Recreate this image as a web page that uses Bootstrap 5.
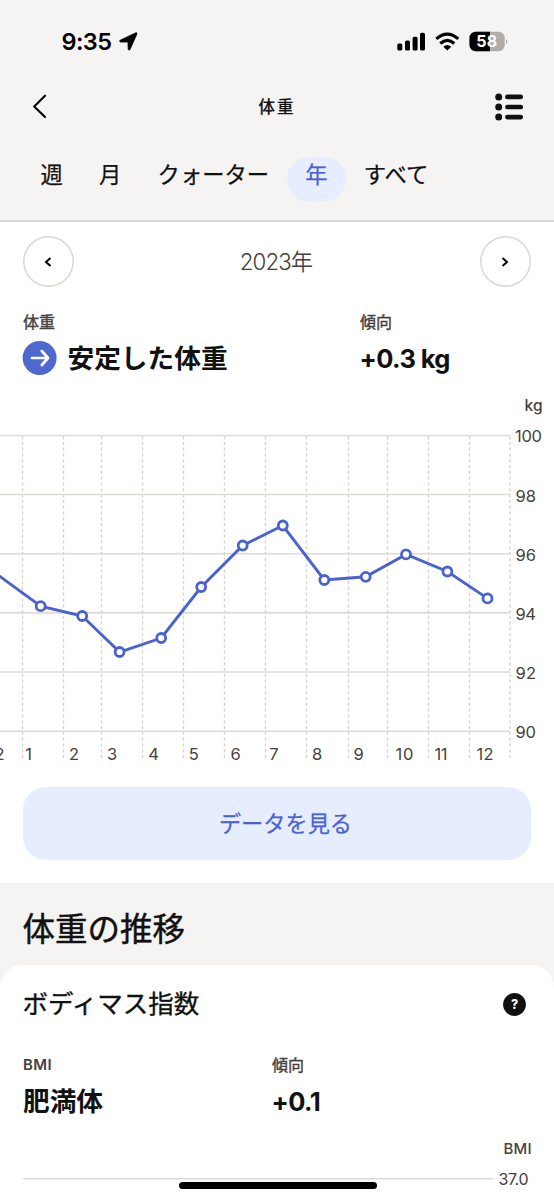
<!DOCTYPE html>
<html lang="ja">
<head>
<meta charset="utf-8">
<meta name="viewport" content="width=device-width, initial-scale=1">
<title>体重</title>
<link rel="stylesheet" href="https://cdn.jsdelivr.net/npm/bootstrap@5.3.0/dist/css/bootstrap.min.css">
<style>
  body { font-family: Inter, "Noto Sans CJK JP", sans-serif; color: #111; background: #fff; }
  .screen { width: 554px; height: 1200px; }
  .app-head { height: 222px; background: #f5f4f3; border-bottom: 2px solid #dbdad8; }
  .status { height: 83px; padding: 0 46px 0 61.5px; color: #000; }
  .clock { font-size: 23.5px; font-weight: 600; letter-spacing: -.6px; line-height: 28px; }
  .title-row { height: 47px; padding: 0 31px 0 32px; }
  .page-title { font-size: 16.5px; font-weight: 500; letter-spacing: 2px; line-height: 22px; margin: 0 1px 0 0; -webkit-text-stroke: .2px; }
  .tabs { padding: 27px 0 0 22.5px; }
  .tab { height: 45px; padding: 0 18.1px 10px; border-radius: 22.5px; font-size: 22.3px; line-height: 35px; font-weight: 400; -webkit-text-stroke: .25px; color: #111; text-decoration: none; }
  .tab.on { background: #e6edff; color: #4a62d0; }
  .period { height: 51px; margin: 14px 23px 0; }
  .round { width: 51px; height: 51px; border: 0; box-shadow: inset 0 0 0 1.5px #dad7d2; border-radius: 50%; background: #fff; padding: 0 1px 0 0; }
  .year { font-size: 22.3px; letter-spacing: -.9px; color: #45413e; font-weight: 350; margin-right: 2px; }
  .stat-label { font-size: 16px; line-height: 20px; font-weight: 600; color: #45413e; }
  .cjk-mid { font-weight: 400; -webkit-text-stroke: .4px; }
  .stat-value { font-size: 26.7px; line-height: 34px; font-weight: 700; color: #111; }
  .num { font-size: 25.5px; letter-spacing: -.6px; line-height: 36px; margin-left: -.5px; }
  .stats { margin: 25px 23px 0; height: 78px; }
  .stats .value-row { margin-top: 9px; }
  .chart { width: 554px; height: 397px; }
  .chart text { font-size: 16.5px; fill: #45413e; font-weight: 400; }
  .see-data { height: 73px; margin: 0 23px; padding: 1px 0 0 17px; border-radius: 23px; background: #e6edff; color: #4a62d0; font-size: 22.2px; -webkit-text-stroke: .25px; border: 0; width: 508px; }
  .trend { margin-top: 23px; height: 317px; background: #f5f4f3; }
  .trend h1 { font-size: 32.5px; line-height: 40px; font-weight: 400; margin: 0; padding: 27px 22.5px 15px; -webkit-text-stroke: .45px; }
  .bmi-card { height: 235px; background: #fff; border-radius: 23px 23px 0 0; }
  .bmi-card h2 { font-size: 25.5px; line-height: 34px; font-weight: 400; margin: 0; -webkit-text-stroke: .35px; }
  .card-title-row { padding: 22px 28px 0 22.5px; }
  .bmi-stats { padding: 34px 23px 0; height: 97px; }
  .bmi-stats .stat-value { margin-top: 9px; }
  .bmi-name { font-size: 15px; letter-spacing: .4px; }
  .bmi-chart { height: 79px; }
  .home-bar { left: 178.5px; top: 1182px; width: 198px; height: 7px; border-radius: 4px; background: #000; }
</style>
</head>
<body>
<div class="screen position-relative overflow-hidden d-flex flex-column">
  <header class="app-head flex-shrink-0">
    <div class="status d-flex align-items-center justify-content-between">
      <div class="d-flex align-items-center">
        <span class="clock">9:35</span>
        <svg style="margin-left:7.500px" width="19" height="19" viewBox="0 0 19 19"><path d="M1.200 8.200 16.500.900Q18.500.200 17.800 2.200L11 17.500Q9.900 19 9.200 17.300L9 10H1.600Q-.300 9.400 1.200 8.200Z" stroke="#000" stroke-width=".8"/></svg>
      </div>
      <svg width="112" height="22" viewBox="396 30.500 112 22">
        <rect x="397.300" y="43" width="5" height="7" rx="1.600"/><rect x="405" y="40" width="5" height="10" rx="1.600"/><rect x="412.600" y="36.300" width="5" height="13.700" rx="1.600"/><rect x="420" y="32.300" width="5" height="17.700" rx="1.600"/>
        <g fill="none" stroke="#000" stroke-width="3.200"><path d="M436.300 38.400Q447.300 29 458.300 38.400"/><path d="M440.300 43Q447.300 36.800 454.300 43"/></g>
        <path d="M443.300 46.200Q447.300 43 451.300 46.200L447.300 50Z"/>
        <path d="M476 31.300h22.500a6.200 6.200 0 0 1 6.200 6.200v7.100a6.200 6.200 0 0 1-6.200 6.200H476Z" fill="#adadab"/>
        <path d="M490 31.300h-14.400a6.200 6.200 0 0 0-6.200 6.200v7.100a6.200 6.200 0 0 0 6.200 6.200H490Z"/>
        <path d="M506 38.300q2.800 2.700 0 5.400Z" fill="#adadab"/>
        <text x="486.700" y="46.800" text-anchor="middle" font-size="16" font-weight="700" fill="#fff" textLength="21">58</text>
      </svg>
    </div>
    <div class="title-row d-flex align-items-center justify-content-between">
      <svg class="mb-1" width="28" height="26" viewBox="0 0 28 26"><path d="M13 3.700 2.200 14.400 13 24.900" fill="none" stroke="#000" stroke-width="2.100" stroke-linecap="round" stroke-linejoin="round"/></svg>
      <span class="page-title">体重</span>
      <svg width="28" height="28" viewBox="0 0 28 28"><g fill="#111"><circle cx="3.700" cy="3.900" r="3.500"/><circle cx="3.700" cy="14" r="3.500"/><circle cx="3.700" cy="24.100" r="3.500"/></g><path d="M12.400 3.900h13.300M12.400 14h13.300M12.400 24.100h13.300" stroke="#111" stroke-width="4.700" stroke-linecap="round"/></svg>
    </div>
    <nav class="tabs d-flex">
      <a class="tab">週</a><a class="tab">月</a><a class="tab">クォーター</a><a class="tab on">年</a><a class="tab">すべて</a>
    </nav>
  </header>

  <div class="period d-flex align-items-center justify-content-between flex-shrink-0">
    <button class="round d-flex align-items-center justify-content-center"><svg width="8" height="10" viewBox="0 0 8 10"><path d="M6.500 1 2 5l4.500 4" fill="none" stroke="#000" stroke-width="2"/></svg></button>
    <span class="year">2023年</span>
    <button class="round d-flex align-items-center justify-content-center"><svg width="8" height="10" viewBox="0 0 8 10"><path d="M1.500 1 6 5 1.500 9" fill="none" stroke="#000" stroke-width="2"/></svg></button>
  </div>

  <section class="stats d-flex flex-shrink-0">
    <div style="width:337px">
      <div class="stat-label cjk-mid">体重</div>
      <div class="value-row d-flex align-items-center">
        <svg class="overflow-visible" width="34" height="34" viewBox="0 0 34 34"><circle cx="16.600" cy="17" r="17" fill="#4f68d0"/><path d="M9 17h15M18.800 10 25 17l-6.200 7" fill="none" stroke="#fff" stroke-width="2.700" stroke-linecap="round" stroke-linejoin="round"/></svg>
        <span class="stat-value" style="margin-left:10.500px">安定した体重</span>
      </div>
    </div>
    <div>
      <div class="stat-label cjk-mid">傾向</div>
      <div class="value-row stat-value num">+0.3 kg</div>
    </div>
  </section>

  <svg class="chart flex-shrink-0" viewBox="0 390 554 397">
    <path d="M22.500 436V761M63.500 436V761M101.500 436V761M142.500 436V761M183.500 436V761M224.500 436V761M265.500 436V761M306.500 436V761M348.500 436V761M387.500 436V761M428.500 436V761M469.500 436V761M510 436V761" stroke="#d6d4d1" stroke-width="1.400" stroke-dasharray="3.200 2.600"/>
    <path d="M0 435.500H510M0 494.500H510M0 553.700H510M0 612.900H510M0 672H510M0 731.200H510" stroke="#dedbd7" stroke-width="1.600"/>
    <polyline points="-2,575 40.700,606.200 82.200,616 119.600,652 161.200,638 201.200,587 242.700,545.500 282.800,525.500 324.300,580 365.700,576.800 406,554.400 447.400,571.500 487.500,598.400" fill="none" stroke="#4a62d0" stroke-width="2.900"/>
    <g fill="#fff" stroke="#4a62d0" stroke-width="2.800"><circle cx="40.700" cy="606.200" r="4.500"/><circle cx="82.200" cy="616" r="4.500"/><circle cx="119.600" cy="652" r="4.500"/><circle cx="161.200" cy="638" r="4.500"/><circle cx="201.200" cy="587" r="4.500"/><circle cx="242.700" cy="545.500" r="4.500"/><circle cx="282.800" cy="525.500" r="4.500"/><circle cx="324.300" cy="580" r="4.500"/><circle cx="365.700" cy="576.800" r="4.500"/><circle cx="406" cy="554.400" r="4.500"/><circle cx="447.400" cy="571.500" r="4.500"/><circle cx="487.500" cy="598.400" r="4.500"/></g>
    <text x="524.500" y="410.500" textLength="18" style="font-size:15.500px;font-weight:450">kg</text>
    <g>
      <text x="515" y="442.300" textLength="27">100</text><text x="515.500" y="501.500" textLength="20.500">98</text><text x="515.500" y="560.500" textLength="20.500">96</text><text x="515.500" y="619.700" textLength="20.500">94</text><text x="515.500" y="679" textLength="20.500">92</text><text x="515.500" y="738" textLength="20.500">90</text>
    </g>
    <g text-anchor="middle">
      <text x="-.500" y="760.300">2</text><text x="28.500" y="760.300">1</text><text x="74" y="760.300">2</text><text x="112" y="760.300">3</text><text x="153.700" y="760.300">4</text><text x="193.700" y="760.300">5</text><text x="235.500" y="760.300">6</text><text x="274" y="760.300">7</text><text x="317" y="760.300">8</text><text x="358.500" y="760.300">9</text><text x="404.500" y="760.300" textLength="18">10</text><text x="441" y="760.300" textLength="13">11</text><text x="485" y="760.300" textLength="17">12</text>
    </g>
  </svg>

  <button class="see-data flex-shrink-0">データを見る</button>

  <section class="trend flex-shrink-0">
    <h1>体重の推移</h1>
    <div class="bmi-card">
      <div class="card-title-row d-flex align-items-center justify-content-between">
        <h2>ボディマス指数</h2>
        <svg width="23" height="23" viewBox="0 0 23 23"><circle cx="11.500" cy="11.500" r="11.400" fill="#111"/><text x="11.500" y="16" text-anchor="middle" font-size="12.500" font-weight="800" fill="#fff">?</text></svg>
      </div>
      <div class="bmi-stats d-flex">
        <div style="width:249px">
          <div class="stat-label bmi-name">BMI</div>
          <div class="stat-value">肥満体</div>
        </div>
        <div>
          <div class="stat-label cjk-mid">傾向</div>
          <div class="stat-value num">+0.1</div>
        </div>
      </div>
      <svg class="chart bmi-chart d-block" viewBox="0 1118 554 79">
        <text x="503.500" y="1153.500" textLength="28" style="font-size:15px;font-weight:450">BMI</text>
        <path d="M23 1178.700H493" stroke="#dedbd7" stroke-width="1.600"/>
        <text x="498.500" y="1184.700" textLength="30" style="font-size:16px">37.0</text>
      </svg>
    </div>
  </section>
  <div class="home-bar position-absolute"></div>
</div>
<script src="https://cdn.jsdelivr.net/npm/bootstrap@5.3.0/dist/js/bootstrap.bundle.min.js"></script>
</body>
</html>
